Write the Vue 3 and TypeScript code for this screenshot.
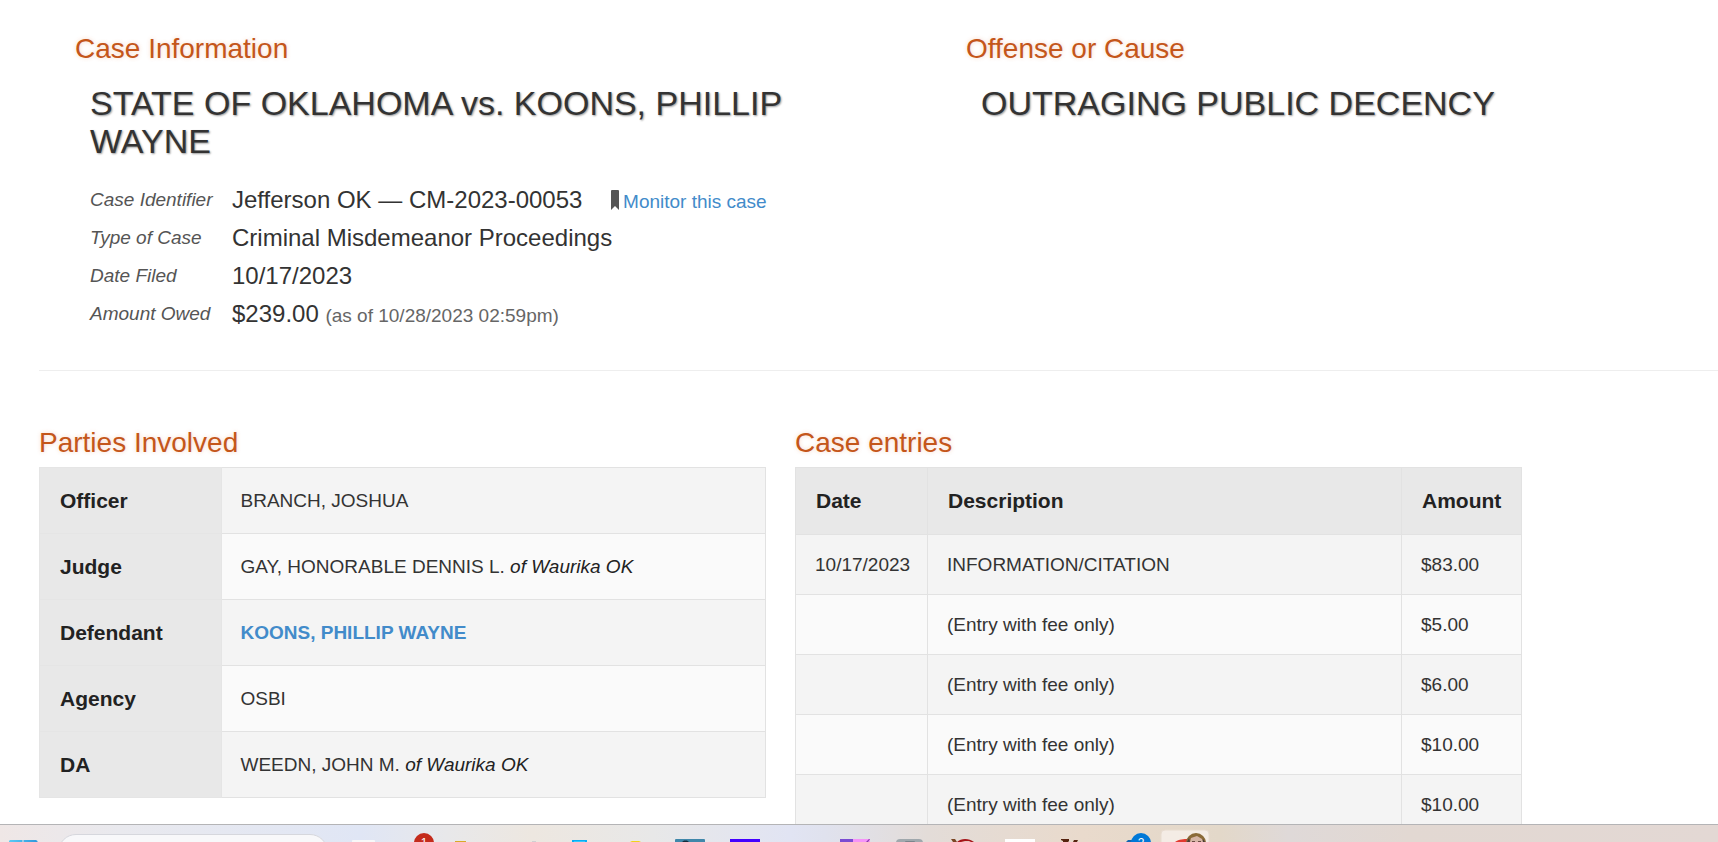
<script setup lang="ts">
interface Party {
  role: string
  name: string
  place?: string
  link?: boolean
}
interface Entry {
  date: string
  description: string
  amount: string
}

const parties: Party[] = [
  { role: 'Officer', name: 'BRANCH, JOSHUA' },
  { role: 'Judge', name: 'GAY, HONORABLE DENNIS L.', place: 'of Waurika OK' },
  { role: 'Defendant', name: 'KOONS, PHILLIP WAYNE', link: true },
  { role: 'Agency', name: 'OSBI' },
  { role: 'DA', name: 'WEEDN, JOHN M.', place: 'of Waurika OK' },
]

const entries: Entry[] = [
  { date: '10/17/2023', description: 'INFORMATION/CITATION', amount: '$83.00' },
  { date: '', description: '(Entry with fee only)', amount: '$5.00' },
  { date: '', description: '(Entry with fee only)', amount: '$6.00' },
  { date: '', description: '(Entry with fee only)', amount: '$10.00' },
  { date: '', description: '(Entry with fee only)', amount: '$10.00' },
]
</script>

<template>
  <div class="screen">
    <main class="page">
      <div class="summary">
        <section>
          <h2 class="section-title">Case Information</h2>
          <div class="detail">
            <h1 class="headline">STATE OF OKLAHOMA vs. KOONS, PHILLIP WAYNE</h1>
            <dl class="facts">
              <dt>Case Identifier</dt>
              <dd>
                Jefferson OK — CM-2023-00053
                <a href="#monitor" class="monitor">
                  <svg class="bookmark" viewBox="0 0 8 20" aria-hidden="true">
                    <path d="M1 0H7Q8 0 8 1V20L4 16L0 20V1Q0 0 1 0Z" fill="#555" />
                  </svg>
                  <span>Monitor this case</span>
                </a>
              </dd>
              <dt>Type of Case</dt>
              <dd>Criminal Misdemeanor Proceedings</dd>
              <dt>Date Filed</dt>
              <dd>10/17/2023</dd>
              <dt>Amount Owed</dt>
              <dd>$239.00 <small>(as of 10/28/2023 02:59pm)</small></dd>
            </dl>
          </div>
        </section>
        <section>
          <h2 class="section-title">Offense or Cause</h2>
          <div class="detail">
            <p class="headline">OUTRAGING PUBLIC DECENCY</p>
          </div>
        </section>
      </div>

      <hr class="rule" />

      <div class="tables">
        <section>
          <h2 class="section-title">Parties Involved</h2>
          <table class="grid parties">
            <tbody>
              <tr v-for="p in parties" :key="p.role">
                <th scope="row">{{ p.role }}</th>
                <td>
                  <a v-if="p.link" href="#party">{{ p.name }}</a>
                  <template v-else>{{ p.name }}</template>
                  <em v-if="p.place">{{ ' ' + p.place }}</em>
                </td>
              </tr>
            </tbody>
          </table>
        </section>
        <section>
          <h2 class="section-title">Case entries</h2>
          <table class="grid entries">
            <thead>
              <tr>
                <th scope="col" class="date">Date</th>
                <th scope="col">Description</th>
                <th scope="col" class="amount">Amount</th>
              </tr>
            </thead>
            <tbody>
              <tr v-for="(e, i) in entries" :key="i">
                <td>{{ e.date }}</td>
                <td>{{ e.description }}</td>
                <td>{{ e.amount }}</td>
              </tr>
            </tbody>
          </table>
        </section>
      </div>
    </main>

    <footer class="taskbar">
      <button class="start" aria-label="Start">
        <svg width="30" height="17" viewBox="8 825 30 17">
          <defs>
            <linearGradient id="win" x1="0" x2="1">
              <stop offset="0" stop-color="#5ccbf5" />
              <stop offset="1" stop-color="#2f98dc" />
            </linearGradient>
          </defs>
          <path d="M10 840H22.500V842H9V841ZM23.500 840H36L37.500 841V842H23.500Z" fill="url(#win)" />
        </svg>
      </button>
      <input class="search" type="search" aria-label="Search" />
      <svg class="apps" width="880" height="17" viewBox="340 825 880 17" aria-hidden="true">
        <rect x="352" y="840" width="23" height="4" rx="1" fill="#f8f8f8" />
        <circle cx="424" cy="843" r="10" fill="#c42b1c" />
        <text x="424" y="847" text-anchor="middle" font-size="12" fill="#fff">1</text>
        <path d="M455 842V841H466V842Z" fill="#d9a928" />
        <path d="M532 842V841H536V842Z" fill="#cfd0d2" />
        <path d="M572 842V840H587V842Z" fill="#08aef5" />
        <path d="M574 842V841H585V842Z" fill="#35c8fb" />
        <path d="M630 842L632 841H639L641 842Z" fill="#f2d21a" />
        <rect x="675" y="839" width="30" height="5" rx="1" fill="#4087aa" />
        <path d="M682 842L684 840.500H687L689 842Z" fill="#132c3d" />
        <rect x="730" y="839" width="30" height="4" fill="#4400ff" />
        <rect x="840" y="839" width="13" height="4" fill="#7b4bd2" />
        <rect x="853" y="839" width="17" height="4" fill="#f593f8" />
        <path d="M866 842L869 839H870L868 842Z" fill="#8a3bb0" />
        <rect x="896" y="839" width="27" height="8" rx="4" fill="#a0a8ad" />
        <rect x="905" y="841" width="10" height="4" rx="1" fill="#7b858c" />
        <path d="M951 839H955L957 842H953Z" fill="#7a4524" />
        <path d="M957 842C961 838 969 838 974 842Z" fill="#a51418" />
        <path d="M961 842L965 841H969L971 842Z" fill="#e6c6bd" />
        <rect x="1005" y="839" width="30" height="4" fill="#fff" />
        <path d="M1061 839H1069V841L1068 842H1063V841L1061 840ZM1073 842L1074 840H1078L1077 842Z" fill="#55230f" />
        <path d="M1126 842L1128 840H1134V842Z" fill="#1364b0" />
        <circle cx="1141" cy="843" r="10" fill="#0078d7" />
        <text x="1141" y="847" text-anchor="middle" font-size="12" fill="#fff">2</text>
        <rect x="1161" y="830" width="48" height="20" rx="4" fill="#f4ece5" stroke="#e8dcd0" />
        <path d="M1175 842C1179 839 1184 839 1188 839V842Z" fill="#e23a30" />
        <circle cx="1196" cy="843" r="10" fill="#8a6a38" />
        <path d="M1187 842L1189 838L1190 842ZM1202 842L1203 839L1205 842Z" fill="#4a3d38" />
        <path d="M1190 842L1191 838L1197 836L1202 839L1203 842Z" fill="#d5b5a6" />
        <path d="M1192 841H1195V842H1192ZM1198 841H1201V842H1198Z" fill="#6b4c42" />
      </svg>
    </footer>
  </div>
</template>

<style>
body {
  margin: 0;
  background: #fff;
}
</style>

<style scoped>
.screen {
  display: flex;
  flex-direction: column;
  height: 100vh;
  overflow: hidden;
  background: #fff;
  color: #333;
  font-family: "Liberation Sans", Arial, sans-serif;
  font-size: 19px;
}
.page {
  flex: 1;
  min-height: 0;
  overflow: hidden;
  padding: 34px 0 0 39px;
}
.summary {
  display: grid;
  grid-template-columns: 855fr 752fr;
  column-gap: 36px;
  padding-left: 36px;
}
.section-title {
  margin: 0;
  font-size: 28px;
  line-height: 30px;
  font-weight: 400;
  color: #c4561a;
  text-shadow: 0 0 4px rgba(230, 120, 60, 0.3);
}
.detail {
  padding: 20px 60px 0 15px;
}
.headline {
  margin: 0;
  font-size: 34px;
  line-height: 38px;
  font-weight: 400;
  text-shadow: 1px 1px 2px rgba(0, 0, 0, 0.4);
}
.facts {
  display: grid;
  grid-template-columns: 142px 1fr;
  grid-auto-rows: 38px;
  align-items: center;
  margin: 21px 0 0;
  line-height: 38px;
}
.facts dt {
  font-style: italic;
  color: #555;
}
.facts dd {
  margin: 0;
  font-size: 24px;
}
.facts small {
  font-size: 19px;
  line-height: 1;
  color: #666;
}
a {
  color: #428bca;
  text-decoration: none;
}
.monitor {
  margin-left: 22px;
  font-size: 19px;
  line-height: 1;
}
.bookmark {
  width: 8px;
  height: 20px;
  margin-right: 4px;
  vertical-align: -2px;
}
.rule {
  height: 0;
  margin: 37px 0 57px;
  border: 0;
  border-top: 1px solid #eee;
}
.tables {
  display: grid;
  grid-template-columns: 727fr 727fr 167fr;
  column-gap: 29px;
}
.grid {
  width: 100%;
  margin-top: 9px;
  border-collapse: collapse;
  table-layout: fixed;
  border: 1px solid #e2e2e2;
}
.grid th,
.grid td {
  box-sizing: border-box;
  border: 1px solid #e2e2e2;
  text-align: left;
  white-space: nowrap;
}
.grid th {
  height: 66px;
  padding: 0 0 0 20px;
  background: #e8e8e8;
  color: #222;
  font-size: 21px;
}
.entries th {
  height: 67px;
}
.grid td {
  padding: 0 0 0 19px;
}
.parties th {
  width: 25%;
  border-color: #e5e5e5;
}
.entries td {
  height: 60px;
}
.entries .date {
  width: 132px;
}
.entries .amount {
  width: 120px;
}
.grid tbody tr:nth-child(odd) {
  background: #f4f4f4;
}
.grid tbody tr:nth-child(even) {
  background: #fafafa;
}
.grid em {
  color: #222;
}
.grid a {
  font-weight: 700;
}
.taskbar {
  display: flex;
  align-items: flex-start;
  height: 17px;
  overflow: hidden;
  border-top: 1px solid #b4b4b6;
  padding-left: 8px;
  background: linear-gradient(
    90deg,
    #efe7e6 0%,
    #e9e9ee 7%,
    #e0e6f5 21%,
    #e8e8ea 26%,
    #ede7e0 31%,
    #e8e8e8 38%,
    #e1e4f3 46%,
    #e0e2ee 48%,
    #e3dcd8 54%,
    #e9dacc 63%,
    #e3d8c9 71%,
    #dfd9d8 75%,
    #e2d8d2 82%,
    #e3d8d4 100%
  );
}
.start {
  height: 17px;
  padding: 0;
  border: 0;
  background: none;
}
.start svg,
.apps {
  display: block;
  flex: none;
}
.search {
  box-sizing: border-box;
  width: 270px;
  height: 36px;
  margin: 9px 12px 0 20px;
  flex: none;
  border: 1px solid #d6d7dd;
  border-radius: 18px;
  background: #f8f8fa;
}
</style>
